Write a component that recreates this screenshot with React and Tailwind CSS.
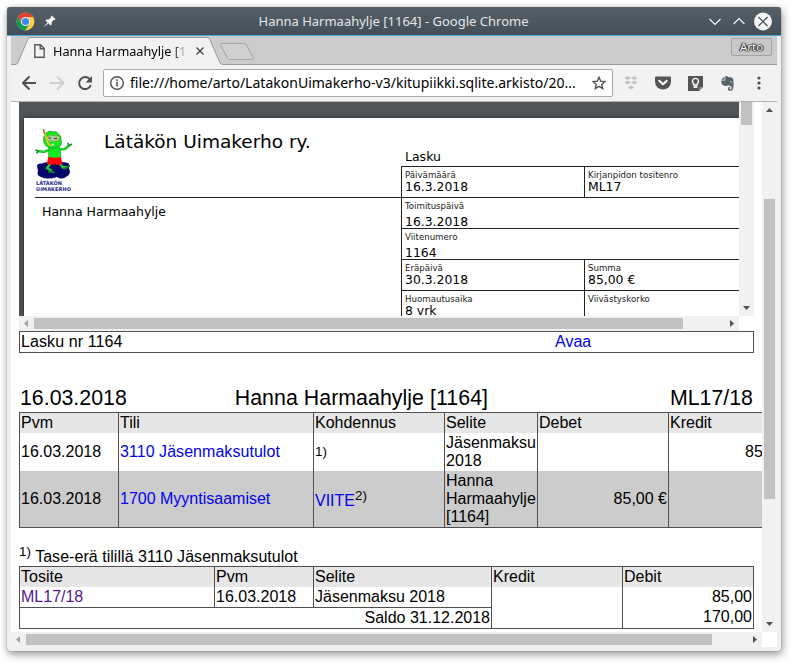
import React from "react";

const noto = "font-['Noto_Sans',sans-serif]";
const dejavu = "font-['DejaVu_Sans',sans-serif]";

function Triangle({ dir, color = "#505050" }) {
  const pts = {
    up: "0,4 3.5,0 7,4",
    down: "0,0 7,0 3.5,4",
    left: "4,0 4,7 0,3.5",
    right: "0,0 4,3.5 0,7",
  }[dir];
  const v = dir === "up" || dir === "down";
  return (
    <svg width={v ? 7 : 4} height={v ? 4 : 7} className="block">
      <polygon points={pts} fill={color} />
    </svg>
  );
}

function HScroll({ thumb }) {
  return (
    <div className="flex h-[15px] w-full items-center bg-[#f1f1f1]">
      <div className="flex w-[15px] shrink-0 pl-[5px]">
        <Triangle dir="left" color="#a3a3a3" />
      </div>
      <div className={`h-[11px] bg-[#c1c1c1] ${thumb}`} />
      <div className="flex-1" />
      <div className="flex w-[15px] shrink-0 pl-[6px]">
        <Triangle dir="right" />
      </div>
    </div>
  );
}

function ChromeLogo() {
  return (
    <svg width="19" height="19" viewBox="0 0 19 19" className="block">
      <circle cx="9.5" cy="9.5" r="9" fill="#ffcd40" />
      <path d="M1.7 5A9 9 0 0 1 17.3 5L9.5 5.2L5.6 11.8Z" fill="#db4437" />
      <path d="M1.7 5A9 9 0 0 0 9.3 18.5L13.4 11.7L9.5 13.5L5.7 11.8Z" fill="#0f9d58" />
      <circle cx="9.5" cy="9.5" r="4.6" fill="#f1f1f1" />
      <circle cx="9.5" cy="9.5" r="3.6" fill="#4285f4" />
    </svg>
  );
}

function TitleBar() {
  return (
    <div className="flex h-[29px] shrink-0 items-center rounded-t-[3px] border-b border-[#4ba6dc] bg-linear-to-b from-[#556068] to-[#444e56] pl-[9px] pr-[8px]">
      <ChromeLogo />
      <svg width="12" height="12" viewBox="0 0 12 12" className="ml-[9px] block">
        <path d="M7.6 0.4L11.6 4.2L10.4 5L9.8 4.8L7.6 7.2L7.6 9.6L6.6 10.4L4.4 8.2L0.6 11.6L0.2 11.2L3.6 7.4L1.4 5.4L2.4 4.4L4.8 4.4L7.2 2.2L7 1.4Z" fill="#fcfcfc" />
      </svg>
      <div className={`flex-1 text-center text-[13px] leading-[18px] text-[#e4e6e8] ${noto}`}>
        <span className="ml-[22px] whitespace-pre">Hanna Harmaahylje [1164] - Google Chrome</span>
      </div>
      <svg width="64" height="19" viewBox="0 0 64 19" className="block">
        <path d="M0.5 7L6 12.5L11.5 7M24.5 12L30 6.5L35.5 12" stroke="#fcfcfc" strokeWidth="1.1" fill="none" />
        <circle cx="54" cy="9.5" r="9" fill="#f3f4f4" />
        <path d="M49.5 5L58.5 14M58.5 5L49.5 14" stroke="#3f4950" strokeWidth="1.2" />
      </svg>
    </div>
  );
}

function TabStrip() {
  return (
    <div className="relative flex h-[29px] shrink-0 items-start bg-[#cccccc]">
      <svg width="766" height="29" className="absolute left-0 top-0">
        <path d="M0 28.5H766" stroke="#9b9b9b" />
        <path d="M3 29L6.5 27.5L16.5 3.2Q17.3 1.5 19 1.5H196Q198 1.5 198.8 3.2L209.5 27.5L213 29Z" fill="#f2f2f2" />
        <path d="M0 28.5H4Q6 28.5 6.8 26.8L16.8 3.2Q17.5 1.5 19 1.5H196Q197.8 1.5 198.6 3.2L209 26.8Q210 28.5 212 28.5" fill="none" stroke="#989898" />
        <path d="M210.5 7.5H233Q234.8 7.5 235.6 9L242 21.5Q242.8 23.5 241 23.5H219Q217.3 23.5 216.5 22L209.5 9Q209 7.5 210.5 7.5Z" fill="#d0d0d0" stroke="#a5a5a5" />
      </svg>
      <div className="relative flex w-full items-start pl-[23px]">
        <svg width="11" height="14" className="mt-[8px] block">
          <path d="M0.8 0.8H6.5L10.2 4.5V13.2H0.8ZM6.2 0.8V4.8H10.2" fill="none" stroke="#5a5a5a" strokeWidth="1.4" />
        </svg>
        <div className={`ml-[8px] mt-[5px] w-[133px] whitespace-pre bg-linear-to-r from-black from-88% to-[#e8e0d8] to-100% bg-clip-text text-[12.7px] leading-[20px] text-transparent ${noto}`}>
          Hanna Harmaahylje [1
        </div>
        <svg width="8" height="8" className="ml-[10px] mt-[11px] block">
          <path d="M0.5 0.5L7.5 7.5M7.5 0.5L0.5 7.5" stroke="#505050" strokeWidth="1.5" />
        </svg>
        <div className={`ml-auto mr-[5px] mt-[2px] flex h-[18px] w-[41px] items-center justify-center rounded-[2px] border border-[#a4a4a4] bg-[#c8c8c8] text-[11.5px] leading-none text-white [text-shadow:0_0_1px_#222,0_0_1px_#222,0_0_2px_#222,1px_0_1px_#333,-1px_0_1px_#333] ${noto}`}>
          Arto
        </div>
      </div>
    </div>
  );
}

function Toolbar() {
  return (
    <div className="flex h-[37px] shrink-0 items-center border-b border-[#b4b4b4] bg-[#f2f2f2] pl-[11px]">
      <svg width="71" height="16" viewBox="0 0 71 16" className="block">
        <path d="M14 8H1.5M7.5 1.5L1 8L7.5 14.5" stroke="#505050" strokeWidth="2" fill="none" />
        <path d="M28 8H41M35 1.5L41.5 8L35 14.5" stroke="#d0d0d0" strokeWidth="2" fill="none" />
        <path d="M67.7 4.2A6 6 0 1 0 68.8 10" stroke="#505050" strokeWidth="2" fill="none" />
        <path d="M70 1V7.4H63.6Z" fill="#505050" />
      </svg>
      <div className="ml-[10px] flex h-[28px] w-[510px] items-center rounded-[2px] border border-[#a9a9a9] bg-white pl-[6px]">
        <svg width="14" height="14" className="block shrink-0">
          <circle cx="7" cy="7" r="6.3" fill="none" stroke="#505050" strokeWidth="1.4" />
          <path d="M7 6V10.5M7 3.3V4.9" stroke="#505050" strokeWidth="1.6" />
        </svg>
        <div className={`ml-[6px] flex-1 whitespace-pre text-[14.03px] leading-[22px] text-black ${noto}`}>
          file:///home/arto/LatakonUimakerho-v3/kitupiikki.sqlite.arkisto/20...
        </div>
        <svg width="14" height="14" viewBox="0 0 14 14" className="mr-[6px] block shrink-0">
          <path d="M7 1.3L8.7 5.2L12.9 5.6L9.7 8.4L10.7 12.5L7 10.3L3.3 12.5L4.3 8.4L1.1 5.6L5.3 5.2Z" fill="none" stroke="#505050" strokeWidth="1.4" />
        </svg>
      </div>
      <svg width="14" height="14" viewBox="0 0 14 14" className="ml-[11px] block fill-[#c3c3c3]">
        <path d="M3.7 0L7 2L3.7 4L0.3 2ZM10.3 0L13.7 2L10.3 4L7 2ZM3.7 4.6L7 6.6L3.7 8.6L0.3 6.6ZM10.3 4.6L13.7 6.6L10.3 8.6L7 6.6ZM7 9.5L10.3 11.5L7 13.5L3.7 11.5Z" />
      </svg>
      <svg width="16" height="14" viewBox="0 0 16 14" className="ml-[17px] block">
        <path d="M1 0.5H15Q16 0.5 16 1.5V5.5A8 8 0 0 1 0 5.5V1.5Q0 0.5 1 0.5Z" fill="#555" />
        <path d="M4.3 4.8L8 8.2L11.7 4.8" stroke="#fff" strokeWidth="2.2" strokeLinecap="round" strokeLinejoin="round" fill="none" />
      </svg>
      <svg width="15" height="15" viewBox="0 0 15 15" className="ml-[17px] block">
        <path d="M0 0H15V11L11 15H0Z" fill="#555" />
        <path d="M15 11H11V15Z" fill="#8b8b8b" />
        <path d="M5.8 9V7.8A3 3 0 1 1 9.2 7.8V9Z" fill="none" stroke="#fff" strokeWidth="1.4" />
        <path d="M5.6 11H9.4" stroke="#fff" strokeWidth="1.8" />
      </svg>
      <svg width="13" height="15" viewBox="0 0 13 15" className="ml-[18px] block">
        <path d="M0.3 3.7L3.5 0.5V3.7ZM4.3 0.2Q6.3 -0.2 7 1L10.5 1.5Q12 1.8 12.3 4Q13 9 12 13Q11.6 14.7 9.8 14.7H8.5Q6.8 14.5 6.8 12.7Q6.8 11 8.5 11H9.2V12.3H8.6Q8.3 13.2 9.3 13.3H10Q10.8 13.2 10.7 11.5Q10.5 9.8 8.5 9.7Q7.5 9.6 7.2 8.8Q6.7 10.2 5 10L2.5 9.6Q1 9.2 0.6 7Q0.2 5.5 0.3 4.5H4.3Z" fill="#55636a" />
        <path d="M9.3 6Q10.4 5 11.2 6.6" stroke="#f2f2f2" strokeWidth="0.9" fill="none" />
      </svg>
      <svg width="4" height="14" className="ml-[23px] block fill-[#505050]">
        <circle cx="2" cy="2" r="1.6" />
        <circle cx="2" cy="7" r="1.6" />
        <circle cx="2" cy="12" r="1.6" />
      </svg>
    </div>
  );
}

function FrogLogo() {
  return (
    <svg width="38" height="64" viewBox="0 0 38 64" className="block shrink-0">
      <path d="M2 37Q2 34 7 34.5Q12 32 18 34.500Q26 32 33 34Q35 36 34 39.500Q37 45 31 48Q26 51 22 48Q12 51 6 48Q1 46 3 42Z" fill="#06066b" />
      <path d="M15 20.500L9 23L3 22M24 20.500L30 20L34 16.500" stroke="#22cc33" strokeWidth="2.6" fill="none" />
      <path d="M4 22.300L0.5 21M3.500 22.300L1.500 24.500M33.500 17L33 13.500M33.500 17L37 15" stroke="#168a2a" strokeWidth="1.5" />
      <path d="M14 18Q19 17 24.500 18.500Q26.500 24 25.500 31H14Q13 24 14 18Z" fill="#11e922" stroke="#118822" strokeWidth="0.5" />
      <path d="M8.500 9Q9 4.500 12 3.500Q15 1 18 3Q21 1.500 23 4.500Q27 7 26 11Q28 17 22 18.800Q14 20 11 17Q8 13 8.500 9Z" fill="#11e922" stroke="#118822" strokeWidth="0.6" />
      <path d="M11 7.500Q17 5.500 24.500 7L24 11.500Q18 13 12.500 12Z" fill="#a8cf98" stroke="#8f9b30" strokeWidth="0.8" />
      <path d="M13.500 9H16M19 9.500H22" stroke="#334" strokeWidth="1.1" />
      <path d="M8.500 1L12.500 13Q14 17 17.500 16.500" stroke="#e8c91c" strokeWidth="1.6" fill="none" />
      <path d="M8 -0.500L10 5" stroke="#a06020" strokeWidth="1.2" />
      <path d="M17 15.500H19" stroke="#eee" strokeWidth="1.6" />
      <path d="M16 34L12 39L17 42M24 34L28 38.500L33 38" stroke="#22cc33" strokeWidth="2.4" fill="none" />
      <path d="M13 42.500L20 43.500M29 40L35 36.500" stroke="#147a28" strokeWidth="1.8" />
      <path d="M13 28Q20 29.500 26 28L27.500 35.500L21 36L20 34.500L18.500 36L12 35Z" fill="#ff0505" />
      <g fill="#24248c" fontFamily="DejaVu Sans" fontWeight="700" fontSize="5">
        <text x="1" y="56" textLength="26">LÄTÄKÖN</text>
        <text x="1" y="62" textLength="35">UIMAKERHO</text>
      </g>
    </svg>
  );
}

function Field({ label, value, low, w, line }) {
  return (
    <div className={`h-full ${w} ${line ? "border-l border-[#222] pl-[3px]" : "pl-[3px]"}`}>
      <div className="h-[11px] whitespace-pre pt-[3px] text-[8.65px] leading-[11px] text-[#222]">{label}</div>
      <div className={`whitespace-pre text-[12.4px] leading-[15px] text-black ${low ? "pt-[5px]" : "pt-[1px]"}`}>{value}</div>
    </div>
  );
}

function Row({ children }) {
  return <div className="flex h-[31px] shrink-0 border-t border-[#222]">{children}</div>;
}

function Invoice() {
  return (
    <div className={`flex h-[214px] w-[720px] overflow-hidden bg-[#525659] pl-[5px] pt-[16px] ${dejavu}`}>
      <div className="flex h-[198px] w-[715px] bg-white shadow-[0_0_5px_rgba(0,0,0,0.6)]">
        <div className="w-[377px] shrink-0 pl-[11px]">
          <div className="flex h-[80px] border-b border-[#222] pt-[11px]">
            <FrogLogo />
            <div className="ml-[31px] mt-[1px] whitespace-pre text-[18.5px] leading-[24px] text-black">Lätäkön Uimakerho ry.</div>
          </div>
          <div className="pl-[7px] pt-[6px] text-[12.5px] leading-[16px] text-black">Hanna Harmaahylje</div>
        </div>
        <div className="flex flex-1 flex-col">
          <div className="h-[48px] shrink-0 pl-[4px] pt-[31px] text-[12.5px] leading-[16px] text-black">Lasku</div>
          <div className="h-[150px] border-l border-[#222]">
            <Row>
              <Field label="Päivämäärä" value="16.3.2018" w="w-[182px]" />
              <Field label="Kirjanpidon tositenro" value="ML17" w="flex-1" line />
            </Row>
            <Row><Field label="Toimituspäivä" value="16.3.2018" w="w-[182px]" low /></Row>
            <Row><Field label="Viitenumero" value="1164" w="w-[182px]" low /></Row>
            <Row>
              <Field label="Eräpäivä" value="30.3.2018" w="w-[182px]" />
              <Field label="Summa" value="85,00 €" w="flex-1" line />
            </Row>
            <Row>
              <Field label="Huomautusaika" value="8 vrk" w="w-[182px]" />
              <Field label="Viivästyskorko" value="" w="flex-1" line />
            </Row>
          </div>
        </div>
      </div>
    </div>
  );
}

const entryCols = "grid grid-cols-[99px_195px_131px_93px_131px_129px]";
const cell = "flex items-center border-r border-[#505050] pl-[1px]";

function Entries() {
  return (
    <div className="w-[780px] border border-[#505050] leading-[18px]">
      <div className={`${entryCols} h-[20px] bg-[#e6e6e6]`}>
        <div className={cell}>Pvm</div>
        <div className={cell}>Tili</div>
        <div className={cell}>Kohdennus</div>
        <div className={cell}>Selite</div>
        <div className={cell}>Debet</div>
        <div className="flex items-center pl-[1px]">Kredit</div>
      </div>
      <div className={`${entryCols} h-[38px]`}>
        <div className={cell}>16.03.2018</div>
        <div className={`${cell} tracking-[0.05px] text-[#0000ee]`}>3110 Jäsenmaksutulot</div>
        <div className={`${cell} text-[13.33px]`}>1)</div>
        <div className={cell}>Jäsenmaksu<br />2018</div>
        <div className={cell} />
        <div className="flex items-center whitespace-pre pl-[76px]">85,00 €</div>
      </div>
      <div className={`${entryCols} h-[56px] bg-[#cccccc]`}>
        <div className={cell}>16.03.2018</div>
        <div className={`${cell} text-[#0000ee]`}>1700 Myyntisaamiset</div>
        <div className={cell}>
          <span className="pt-[4px] text-[#0000ee]">VIITE</span>
          <span className="pb-[6px] text-[13.33px]">2)</span>
        </div>
        <div className={cell}>Hanna<br />Harmaahylje<br />[1164]</div>
        <div className={`${cell} justify-end pr-[1px]`}>85,00 €</div>
        <div />
      </div>
    </div>
  );
}

function Balance() {
  return (
    <div className="flex h-[63px] w-[735px] border border-[#505050] leading-[18px]">
      <div className="w-[472px] border-r border-[#505050]">
        <div className="flex h-[20px] bg-[#e6e6e6]">
          <div className={`${cell} w-[195px]`}>Tosite</div>
          <div className={`${cell} w-[99px]`}>Pvm</div>
          <div className="pl-[1px] pt-[1px]">Selite</div>
        </div>
        <div className="flex h-[21px] border-b border-[#505050]">
          <div className={`${cell} w-[195px] text-[#551a8b]`}>ML17/18</div>
          <div className={`${cell} w-[99px]`}>16.03.2018</div>
          <div className="pl-[1px] pt-[1px]">Jäsenmaksu 2018</div>
        </div>
        <div className="pr-[1px] pt-[1px] text-right">Saldo 31.12.2018</div>
      </div>
      <div className="w-[131px] border-r border-[#505050]">
        <div className="h-[20px] bg-[#e6e6e6] pl-[1px] pt-[1px]">Kredit</div>
      </div>
      <div className="flex-1">
        <div className="h-[20px] bg-[#e6e6e6] pl-[1px] pt-[1px]">Debit</div>
        <div className="pr-[1px] text-right leading-[20px]">85,00<br />170,00</div>
      </div>
    </div>
  );
}

function Page() {
  return (
    <div className="flex h-[530px] w-[751px] flex-col overflow-hidden bg-white pl-[8px] font-['Liberation_Sans',Arial,sans-serif] text-[16px] text-black">
      <div className="flex h-[229px] shrink-0">
        <div className="w-[720px]">
          <Invoice />
          <HScroll thumb="w-[649px]" />
        </div>
        <div className="flex h-[214px] w-[15px] flex-col items-center bg-[#f1f1f1] pb-[6px]">
          <div className="h-[23px] w-[11px] bg-[#c1c1c1]" />
          <div className="flex-1" />
          <Triangle dir="down" />
        </div>
      </div>
      <div className="flex h-[22px] w-[735px] shrink-0 items-center border border-[#505050] pl-[1px] leading-[18px]">
        <span className="w-[534px] tracking-[0.1px]">Lasku nr 1164</span>
        <span className="text-[#0000ee]">Avaa</span>
      </div>
      <div className="flex h-[59px] w-[735px] shrink-0 items-end justify-between pb-[2px] pl-[1px] pr-[1px] text-[21.33px] leading-[24px]">
        <span>16.03.2018</span>
        <span className="-translate-x-[37px] tracking-[0.05px]">Hanna Harmaahylje [1164]</span>
        <span>ML17/18</span>
      </div>
      <Entries />
      <div className="h-[38px] shrink-0 whitespace-pre pt-[19px] leading-[20px] tracking-[0.04px]">
        <span className="relative -top-[6px] text-[13.33px]">1)</span> Tase-erä tilillä 3110 Jäsenmaksutulot
      </div>
      <Balance />
    </div>
  );
}

export default function App() {
  return (
    <div className="h-[664px] w-[794px] overflow-hidden bg-white pl-[7px] pt-[7px]">
      <div className="flex h-[644px] w-[774px] flex-col rounded-[3px] bg-[#eff0f1] shadow-[1px_3px_8px_rgba(0,0,0,0.45),0_0_1px_rgba(0,0,0,0.6)]">
        <TitleBar />
        <div className="mx-[4px] flex h-[611px] flex-col">
          <TabStrip />
          <Toolbar />
          <div className="flex h-[530px]">
            <Page />
            <div className="flex w-[15px] flex-col items-center bg-[#f1f1f1] pb-[6px] pt-[6px]">
              <Triangle dir="up" />
              <div className="mt-[87px] h-[300px] w-[11px] bg-[#c1c1c1]" />
              <div className="flex-1" />
              <Triangle dir="down" />
            </div>
          </div>
          <div className="flex">
            <div className="w-[751px]"><HScroll thumb="w-[686px]" /></div>
            <div className="h-[15px] w-[15px] bg-white" />
          </div>
        </div>
      </div>
    </div>
  );
}
